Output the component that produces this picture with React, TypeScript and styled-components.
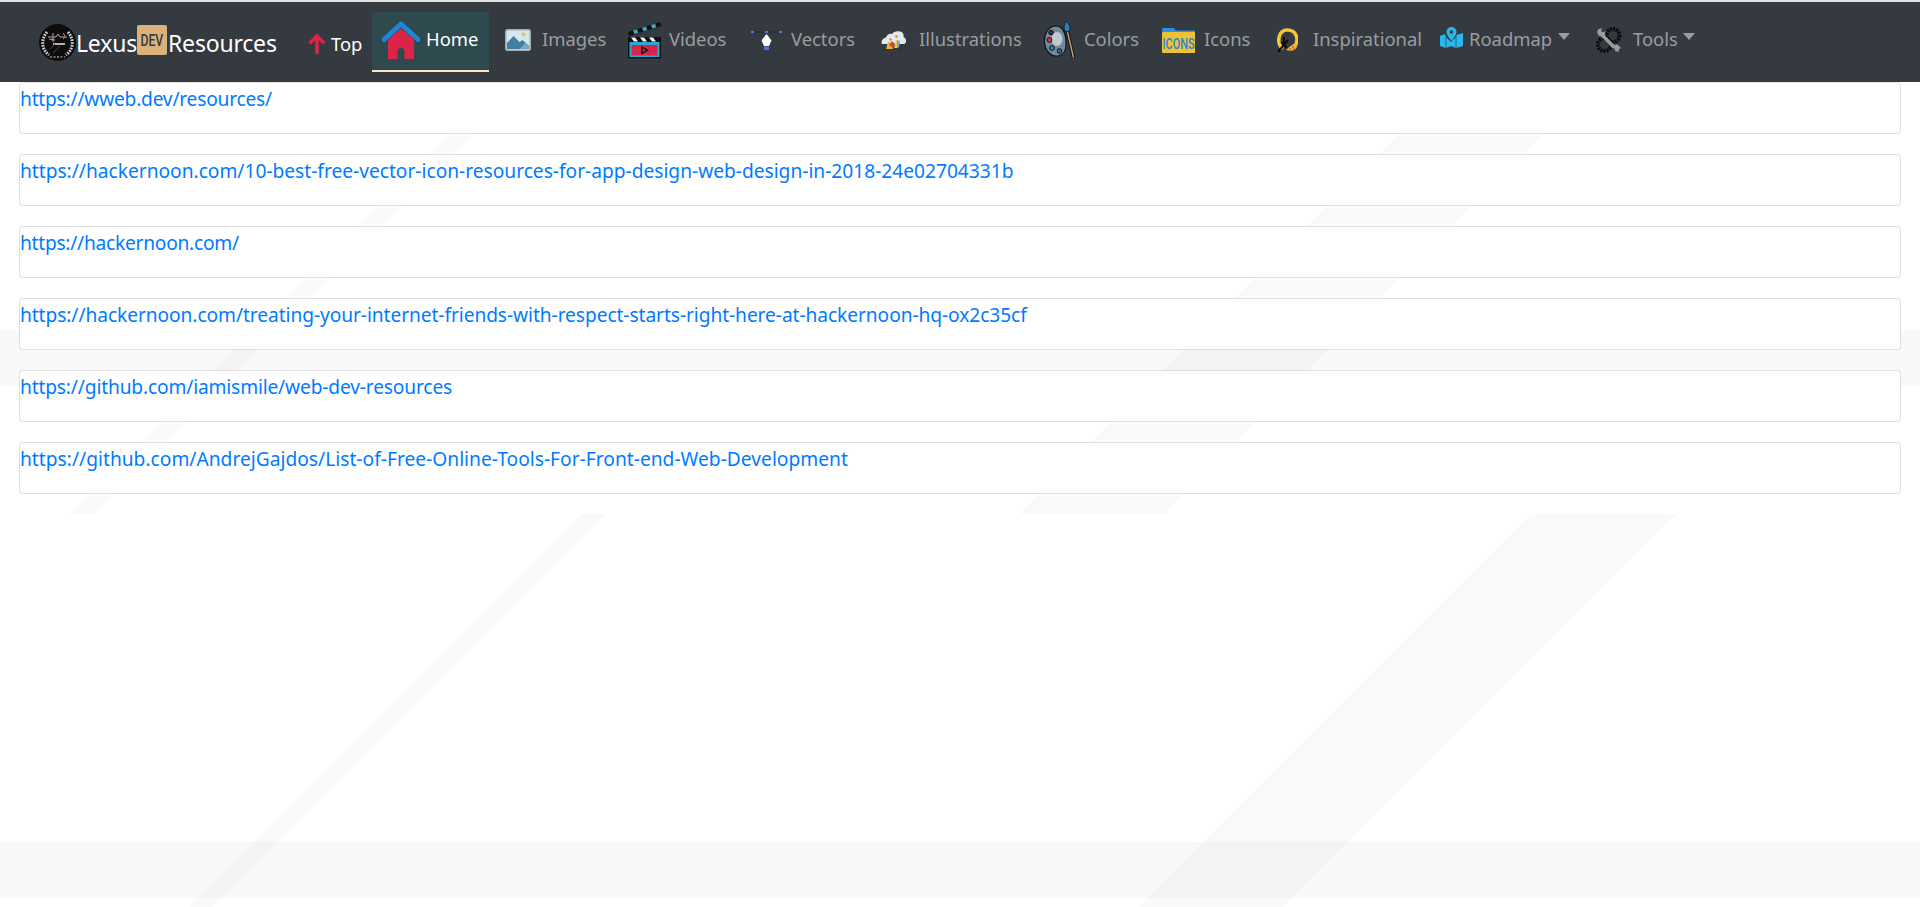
import React from "react";
import styled, { createGlobalStyle } from "styled-components";

const Global = createGlobalStyle`
  html, body { margin: 0; padding: 0; height: 100%; }
  body {
    font-family: "Noto Sans", "Open Sans", "Liberation Sans", sans-serif;
    background-color: #fff;
    background-image:
      linear-gradient(135deg, transparent 411.5px, rgba(40,60,50,.026) 411.5px, rgba(40,60,50,.026) 428.5px, transparent 428.5px, transparent 1082.6px, rgba(40,60,50,.026) 1082.6px, rgba(40,60,50,.026) 1185.8px, transparent 1185.8px),
      linear-gradient(180deg, transparent 328px, rgba(40,60,50,.03) 328px, rgba(40,60,50,.03) 384px, transparent 384px);
    background-size: 1920px 512px;
    background-position: 0 2px;
    background-repeat: repeat;
  }
`;

const Page = styled.div`
  min-height: 905px;
  border-top: 2px solid #e2e2e2;
`;

const NavBar = styled.nav`
  display: flex;
  align-items: center;
  height: 80px;
  padding-left: 39px;
  background: #343a40;
  box-sizing: border-box;
`;

const Brand = styled.a`
  display: flex;
  align-items: center;
  height: 38px;
  color: #fff;
  font-size: 23px;
  letter-spacing: -0.2px;
  white-space: nowrap;
  text-decoration: none;
`;

const BrandWord = styled.span<{ $w: number }>`
  display: block;
  width: ${(p) => p.$w}px;
  margin-top: 2px;
`;

const DevBadge = styled.span`
  display: flex;
  align-items: center;
  justify-content: center;
  width: 30px;
  height: 30px;
  margin: 0 1px 5px 0;
  border-radius: 2px;
  background: #dbb27c;
  color: #343a40;
  font-family: "Roboto", "Liberation Sans", sans-serif;
  font-weight: 500;
  font-size: 17px;
  letter-spacing: 0;
`;

const DevText = styled.span`
  display: block;
  transform: scaleX(0.72);
`;

const NavLink = styled.a<{ $left: number; $gap: number; $active?: boolean; $light?: boolean }>`
  display: flex;
  align-items: center;
  gap: ${(p) => p.$gap}px;
  height: 60px;
  margin-left: ${(p) => p.$left}px;
  box-sizing: border-box;
  font-size: 18.4px;
  white-space: nowrap;
  color: ${(p) => (p.$light ? "#fff" : "rgba(255,255,255,.5)")};
  background: ${(p) => (p.$active ? "#2f4a4f" : "transparent")};
  border-bottom: 2px solid ${(p) => (p.$active ? "#ffe4c4" : "transparent")};
  padding: ${(p) => (p.$active ? "0 10px" : "0")};
`;

const Label = styled.span<{ $w: number; $low?: boolean }>`
  display: block;
  width: ${(p) => p.$w}px;
  margin-top: ${(p) => (p.$low ? "4px" : "0")};
  margin-bottom: ${(p) => (p.$low ? "0" : "6px")};
`;

const Caret = styled.span<{ $left: number }>`
  display: block;
  width: 0;
  height: 0;
  margin-left: ${(p) => p.$left}px;
  margin-bottom: 9px;
  border-top: 7px solid rgba(255,255,255,.5);
  border-left: 6px solid transparent;
  border-right: 6px solid transparent;
`;

const IconBox = styled.svg<{ $lift?: number; $drop?: number }>`
  display: block;
  flex: none;
  margin-bottom: ${(p) => p.$lift ?? 2}px;
  margin-top: ${(p) => p.$drop ?? 0}px;
`;

const CardList = styled.main`
  display: flex;
  flex-direction: column;
  gap: 20px;
  padding: 0 19px;
`;

const Card = styled.div`
  height: 52px;
  box-sizing: border-box;
  background: #fff;
  border: 1px solid rgba(0,0,0,.125);
  border-radius: 4px;
  font-size: 19.18px;
  line-height: 31px;
`;

const CardLink = styled.a<{ $track: number }>`
  color: #007bff;
  text-decoration: none;
  letter-spacing: ${(p) => p.$track}px;
`;

const Logo = () => (
  <IconBox $lift={0} width="37" height="37" viewBox="0 0 37 37">
    <circle cx="18.5" cy="18.5" r="18.5" fill="#0d0d0d" />
    <path d="M8 8C2 15 2 25 10 31" fill="none" stroke="#d8d8d8" strokeWidth="3" strokeDasharray="1.6 1.2" />
    <path d="M29 8C35 15 35 25 27 31" fill="none" stroke="#d8d8d8" strokeWidth="3" strokeDasharray="1.6 1.2" />
    <path d="M11 33h15" stroke="#cfcfcf" strokeWidth="1.2" strokeDasharray="2 1.5" />
    <path d="M9 13h8l2 -3 2 3h7M10 15l6 1M14 9v9M24 9c2 2 2 5 0 6" fill="none" stroke="#b9a59c" strokeWidth="1" />
    <path d="M14 20h12" stroke="#dedede" strokeWidth="1.6" />
    <path d="M11 25l5-5M14 29l7-7" stroke="#4a4a4a" strokeWidth="1" />
  </IconBox>
);

const Arrow = () => (
  <IconBox $lift={0} $drop={6} width="18" height="20" viewBox="0 0 18 20">
    <path d="M9 20V2M1.5 9.5L9 2l7.5 7.5" fill="none" stroke="#dc2348" strokeWidth="3.6" />
  </IconBox>
);

const HomeIcon = () => (
  <IconBox width="38" height="38" viewBox="0 0 38 38">
    <path d="M6 18.5L19 7.5l13 11V38H22.5v-7.5a3.5 3.5 0 0 0-7 0V38H6z" fill="#dc2348" />
    <path d="M2 18.5L19 3l17 15.5" fill="none" stroke="#1d86da" strokeWidth="5" strokeLinecap="round" strokeLinejoin="round" />
  </IconBox>
);

const ImagesIcon = () => (
  <IconBox width="26" height="22" viewBox="0 0 26 22">
    <rect x="0.8" y="0.8" width="24.4" height="20.4" rx="2" fill="#d3e9f1" stroke="#a2adb2" strokeWidth="1.6" />
    <circle cx="18.5" cy="5.5" r="2" fill="#f3c244" />
    <path d="M2 20V14L8.5 7l6 6 3-2 6.5 6v3z" fill="#3e7fa3" />
    <path d="M15 20l5-6 4 4v2z" fill="#7fa7bf" />
  </IconBox>
);

const VideosIcon = () => (
  <IconBox width="35" height="38" viewBox="0 0 35 38">
    <path d="M1 11L33 1l1.5 4L2 15z" fill="#111" />
    <path d="M6 9.5l4-1.3 1.4 3.6-4 1.3zM15 6.7l4-1.3 1.4 3.6-4 1.3zM24 4l4-1.3 1.4 3.6-4 1.3z" fill="#4b9fc0" />
    <rect x="1" y="16" width="33" height="21.5" fill="#111" />
    <path d="M4 16.5l3 4H11l-3-4zM13 16.5l3 4h4l-3-4zM22 16.5l3 4h4l-3-4z" fill="#fff" />
    <rect x="2.5" y="21" width="30" height="15" fill="#29a9d2" />
    <rect x="4.5" y="24" width="26" height="10.5" fill="#dc2348" />
    <path d="M15 26v6.5l5.5-3.2z" fill="none" stroke="#111" strokeWidth="1.4" />
  </IconBox>
);

const VectorsIcon = () => (
  <IconBox width="31" height="20" viewBox="0 0 31 20">
    <path d="M2 2h27" stroke="#15181c" strokeWidth="1" strokeDasharray="1 1" />
    <path d="M0 1h3v2H0zM14 1h3v2h-3zM28 1h3v2h-3z" fill="#4f72ee" />
    <path d="M15.5 4l5 6.5-2.5 5.5h-5L10.5 10.5z" fill="#fff" />
    <rect x="13" y="16.5" width="5" height="3.5" fill="#4f72ee" />
  </IconBox>
);

const IllustrationIcon = () => (
  <IconBox width="26" height="20" viewBox="0 0 26 20">
    <path d="M1 14c-1.500-4 2-6 4-6.500C6 4 9 3 11 4c1-2 5-3.500 8-2.500 3 .5 4 3 3.500 5.500 3 1.500 3.500 5 1 7H3z" fill="#e6e9ec" />
    <path d="M5 19l2-7 4 1 1 6z" fill="#eab23a" />
    <path d="M8 15l3-4 3 3-2 4z" fill="#cf4a3c" />
    <path d="M13 18l2-8 3 1-1 7z" fill="#f0c93c" />
    <path d="M16 10l3 1-1 6-2 1z" fill="#7aa6d8" />
    <path d="M8 9l2-1 1 2-2 1zM14 6l2-1 1 2-2 1z" fill="#c98c4a" />
    <path d="M4 19.500h2M19 19.500h2M10 19.500h1" stroke="#222" strokeWidth="1" />
  </IconBox>
);

const ColorsIcon = () => (
  <IconBox width="31" height="38" viewBox="0 0 31 38">
    <path d="M12 5C4 5 0 13 0.5 21 1 30 7 36 14 35c6-1 8-5 8-13 0-9-3-17-10-17z" fill="#6f8c9e" stroke="#111" strokeWidth="1.2" />
    <ellipse cx="13" cy="18" rx="5.5" ry="7" fill="#c3c9ce" />
    <circle cx="7" cy="11.5" r="2.3" fill="#2e3a42" stroke="#111" />
    <circle cx="5.5" cy="19" r="2.4" fill="#d8344b" stroke="#111" />
    <circle cx="8" cy="27" r="2.4" fill="#2f88ae" stroke="#111" />
    <circle cx="15.5" cy="30" r="2.3" fill="#2f6f8e" stroke="#111" />
    <path d="M23.5 11l6 25.5" stroke="#111" strokeWidth="3.4" />
    <path d="M23.5 11l6 25.5" stroke="#c9a77b" strokeWidth="1.4" />
    <path d="M22 0c3 3 5 6 3.5 10l-3.5 1c-3-3-2-7 0-11z" fill="#2c80b8" stroke="#111" strokeWidth=".8" />
  </IconBox>
);

const IconsIcon = () => (
  <IconBox width="33" height="25" viewBox="0 0 33 25">
    <path d="M0 3V1.500C0 .7.7 0 1.500 0H12l2 3z" fill="#2f8fe6" />
    <rect x="0" y="2.500" width="33" height="2" fill="#2f8fe6" />
    <rect x="0" y="4" width="33" height="21" rx="1" fill="#efc233" />
    <text x="0.5" y="20.5" fontFamily="Roboto, Liberation Sans, sans-serif" fontWeight="500" fontSize="14" fill="#1f86dc" textLength="32" lengthAdjust="spacingAndGlyphs">ICONS</text>
  </IconBox>
);

const InspirationIcon = () => (
  <IconBox width="21" height="25" viewBox="0 0 21 25">
    <path d="M6 21C-1 15 1 2 10.500 2 19 2 22 11 18.500 17" fill="none" stroke="#f4c536" strokeWidth="3.600" />
    <path d="M9 22c3-3 7-6 10-7l1 4c-1 3-6 5-11 3z" fill="#eab92f" />
    <path d="M12 21l1-1 1 1-1 1zM15 19l1-1 1 1-1 1zM16 21l1-1 1 1-1 1z" fill="#d8344b" />
    <path d="M1 24L11 12M4 14l6 6M7 9v6" fill="none" stroke="#0d0d0d" strokeWidth="2" />
  </IconBox>
);

const RoadmapIcon = () => (
  <IconBox $lift={8} width="23" height="21" viewBox="0 0 23 21">
    <path d="M0 9l5-2 2 4 4 4 4-4 1.500-3L23 6v13l-7 2-5-2-5 2-6-2z" fill="#29b8ee" />
    <path d="M6 8v13M16 8v13" stroke="#343a40" strokeWidth=".7" />
    <path d="M11.500 0a5 5 0 0 1 5 5c0 3-3 6-5 9-2-3-5-6-5-9a5 5 0 0 1 5-5z" fill="#29b8ee" />
    <circle cx="11.500" cy="5" r="1.800" fill="#343a40" />
  </IconBox>
);

const ToolsIcon = () => (
  <IconBox width="26" height="26" viewBox="0 0 26 26">
    <circle cx="17" cy="8.500" r="6.500" fill="none" stroke="#0a0a0a" strokeWidth="4" strokeDasharray="2 1" />
    <circle cx="8.500" cy="17.500" r="6.500" fill="none" stroke="#0a0a0a" strokeWidth="4" strokeDasharray="2 1" />
    <path d="M3 5l4 4 11.500 11.500" stroke="#9c9c9c" strokeWidth="3.600" fill="none" />
    <path d="M2 2.500l4-1.500-1 3 2 1.500 2.500-1.500L9 8 6 9.500 2.500 8.500 1 5zM18 20l2-3 2.500 1.500L25 21l-2 1 0 2.500-3.500 0z" fill="#9c9c9c" />
  </IconBox>
);

const links = [
  { url: "https://wweb.dev/resources/", track: -0.22 },
  { url: "https://hackernoon.com/10-best-free-vector-icon-resources-for-app-design-web-design-in-2018-24e02704331b", track: -0.012 },
  { url: "https://hackernoon.com/", track: -0.26 },
  { url: "https://hackernoon.com/treating-your-internet-friends-with-respect-starts-right-here-at-hackernoon-hq-ox2c35cf", track: -0.077 },
  { url: "https://github.com/iamismile/web-dev-resources", track: -0.16 },
  { url: "https://github.com/AndrejGajdos/List-of-Free-Online-Tools-For-Front-end-Web-Development", track: 0.014 },
];

export default function App() {
  return (
    <Page>
      <Global />
      <NavBar>
        <Brand href="#">
          <Logo />
          <BrandWord $w={61}>Lexus</BrandWord>
          <DevBadge><DevText>DEV</DevText></DevBadge>
          <BrandWord $w={109}>Resources</BrandWord>
        </Brand>
        <NavLink $left={31} $gap={5} $light>
          <Arrow />
          <Label $w={31} $low>Top</Label>
        </NavLink>
        <NavLink $left={10} $gap={6} $light $active>
          <HomeIcon />
          <Label $w={53}>Home</Label>
        </NavLink>
        <NavLink $left={16} $gap={11}>
          <ImagesIcon />
          <Label $w={63}>Images</Label>
        </NavLink>
        <NavLink $left={22} $gap={7}>
          <VideosIcon />
          <Label $w={59}>Videos</Label>
        </NavLink>
        <NavLink $left={23} $gap={9}>
          <VectorsIcon />
          <Label $w={64}>Vectors</Label>
        </NavLink>
        <NavLink $left={26} $gap={12}>
          <IllustrationIcon />
          <Label $w={104}>Illustrations</Label>
        </NavLink>
        <NavLink $left={21} $gap={9}>
          <ColorsIcon />
          <Label $w={56}>Colors</Label>
        </NavLink>
        <NavLink $left={22} $gap={9}>
          <IconsIcon />
          <Label $w={45}>Icons</Label>
        </NavLink>
        <NavLink $left={28} $gap={15}>
          <InspirationIcon />
          <Label $w={106}>Inspirational</Label>
        </NavLink>
        <NavLink $left={21} $gap={6}>
          <RoadmapIcon />
          <Label $w={84}>Roadmap</Label>
          <Caret $left={-1} />
        </NavLink>
        <NavLink $left={26} $gap={11}>
          <ToolsIcon />
          <Label $w={44}>Tools</Label>
          <Caret $left={-5} />
        </NavLink>
      </NavBar>
      <CardList>
        {links.map((l) => (
          <Card key={l.url}>
            <CardLink href={l.url} $track={l.track}>{l.url}</CardLink>
          </Card>
        ))}
      </CardList>
    </Page>
  );
}
